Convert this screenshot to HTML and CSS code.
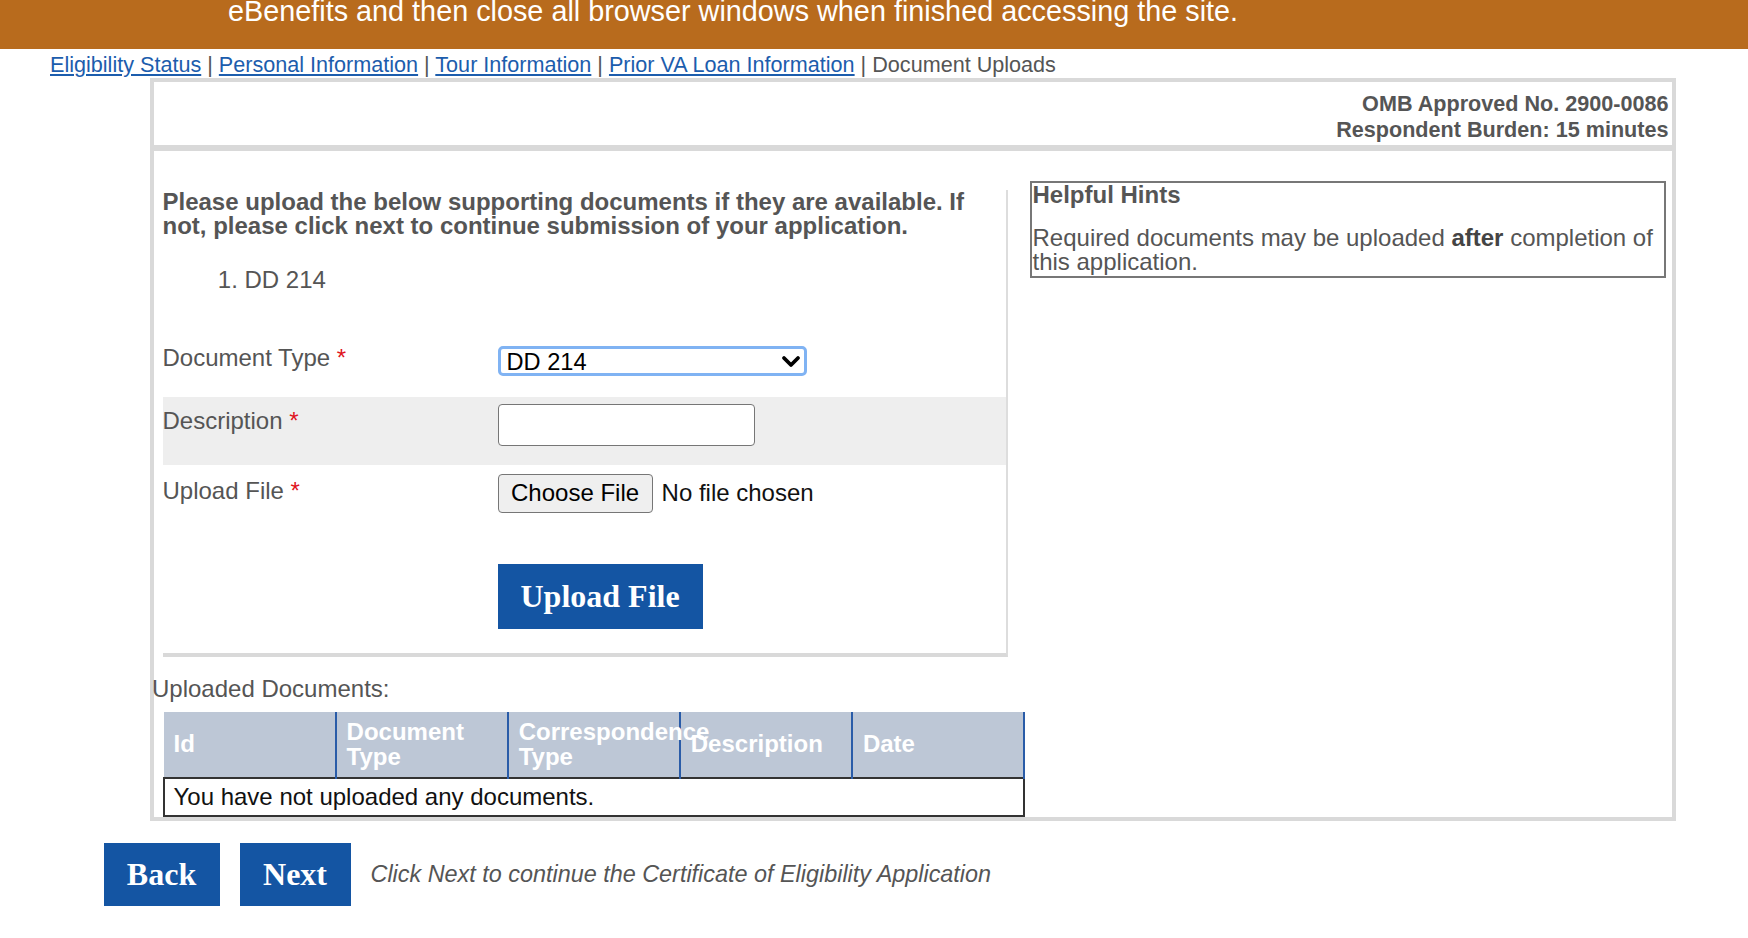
FILE: index.html
```html
<!DOCTYPE html>
<html lang="en">
<head>
<meta charset="utf-8">
<title>Document Uploads</title>
<link rel="stylesheet" href="styles.css">
</head>
<body>
<div class="banner"><p class="banner-text">eBenefits and then close all browser windows when finished accessing the site.</p></div>
<nav class="crumbs"><a href="#">Eligibility Status</a> | <a href="#">Personal Information</a> | <a href="#">Tour Information</a> | <a href="#">Prior VA Loan Information</a> | <span>Document Uploads</span></nav>

<div class="panel">
  <div class="panel-head">
    <div>OMB Approved No. 2900-0086</div>
    <div>Respondent Burden: 15 minutes</div>
  </div>
  <div class="panel-body">
    <div class="upload-col">
      <p class="intro">Please upload the below supporting documents if they are available. If not, please click next to continue submission of your application.</p>
      <ol class="doc-list"><li>DD 214</li></ol>

      <div class="form-row row-type">
        <label class="form-label">Document Type <span class="req">*</span></label>
        <div class="select-wrap">
          <select class="select"><option>DD 214</option></select>
          <svg class="chev" width="20" height="14" viewBox="0 0 20 14"><path d="M3 3 L10 10 L17 3" fill="none" stroke="#000" stroke-width="3.8" stroke-linecap="round" stroke-linejoin="round"/></svg>
        </div>
      </div>
      <div class="form-row row-desc">
        <label class="form-label">Description <span class="req">*</span></label>
        <div><input class="text-input" type="text"></div>
      </div>
      <div class="form-row row-file">
        <label class="form-label">Upload File <span class="req">*</span></label>
        <div class="file-ctl"><span class="file-btn">Choose File</span><span class="file-name">No file chosen</span></div>
      </div>
      <div class="upload-action"><button class="btn-primary btn-upload" type="button">Upload File</button></div>
    </div>
    <aside class="hints">
      <h3 class="hints-title">Helpful Hints</h3>
      <p class="hints-text">Required documents may be uploaded <b>after</b> completion of this application.</p>
    </aside>
  </div>
  <div class="uploaded-label">Uploaded Documents:</div>
  <table class="docs-table">
    <thead>
      <tr><th>Id</th><th>Document Type</th><th>Correspondence Type</th><th>Description</th><th>Date</th></tr>
    </thead>
    <tbody>
      <tr><td colspan="5">You have not uploaded any documents.</td></tr>
    </tbody>
  </table>
</div>

<div class="footer-actions">
  <button class="btn-primary btn-nav btn-back" type="button">Back</button>
  <button class="btn-primary btn-nav btn-next" type="button">Next</button>
  <span class="footer-note">Click Next to continue the Certificate of Eligibility Application</span>
</div>
</body>
</html>
```

FILE: styles.css
```css
* { box-sizing: border-box; }

body {
  margin: 0;
  font-family: "Liberation Sans", Arial, sans-serif;
  font-size: 24px;
  color: #555;
  background: #fff;
}

.banner {
  height: 49px;
  background: #b86b1d;
  overflow: hidden;
}
.banner-text {
  margin: -3.5px 0 0;
  padding-left: 228px;
  color: #fff;
  font-size: 28.8px;
  line-height: 28.8px;
  white-space: nowrap;
}

.crumbs {
  padding: 3px 0 0 50px;
  font-size: 21.6px;
  line-height: 25.5px;
  color: #555;
}
.crumbs a {
  color: #1c5dad;
  text-decoration: underline;
}

.panel {
  margin-left: 150px;
  width: 1526px;
  border: 4px solid #d9d9d9;
}

.panel-head {
  text-align: right;
  font-size: 21.6px;
  font-weight: bold;
  line-height: 26px;
  padding: 9.5px 3.5px 2px 0;
  border-bottom: 6px solid #d9d9d9;
}

.panel-body {
  display: flex;
  align-items: flex-start;
  gap: 22px;
  padding: 30px 6px 0 8.5px;
}

.upload-col {
  flex: 0 0 845px;
  margin-top: 9px;
  border-right: 2px solid #dddddd;
  border-bottom: 4px solid #d9d9d9;
  line-height: 24.5px;
}

.intro {
  margin: 0;
  max-width: 815px;
  font-weight: bold;
  line-height: 24px;
}

.doc-list {
  margin: 30px 0 48px;
  padding-left: 82px;
  line-height: 24px;
}

.form-row {
  display: grid;
  grid-template-columns: 335px 1fr;
  align-items: start;
}
.row-type { height: 57px; padding-top: 6px; }
.row-desc { height: 68px; padding-top: 7px; background: #eeeeee; }
.row-file { height: 48px; padding-top: 9px; }
.row-type .form-label { padding-top: 0; }
.row-desc .form-label { padding-top: 5px; }
.row-file .form-label { padding-top: 5px; }

.form-label { display: block; }
.req { color: #e0141e; }

.select-wrap {
  position: relative;
  width: 309px;
  height: 30px;
}
.select {
  appearance: none;
  -webkit-appearance: none;
  width: 100%;
  height: 100%;
  margin: 0;
  padding: 0 0 0 6px;
  border: 3px solid #80b3f3;
  border-radius: 5px;
  background: #fff;
  font-family: "Liberation Sans", Arial, sans-serif;
  font-size: 23.6px;
  color: #000;
  outline: none;
}
.chev {
  position: absolute;
  right: 6px;
  top: 9px;
  pointer-events: none;
}

.text-input {
  display: block;
  width: 257px;
  height: 42px;
  margin: 0;
  border: 1.5px solid #767676;
  border-radius: 4px;
  background: #fff;
}

.file-ctl {
  display: flex;
  align-items: center;
  font-size: 24px;
  color: #111;
}
.file-btn {
  display: flex;
  align-items: center;
  height: 39px;
  padding: 0 12.5px;
  margin-right: 9px;
  background: #efefef;
  border: 1.5px solid #767676;
  border-radius: 4px;
  color: #000;
}

.upload-action {
  padding: 51px 0 24px 335px;
}

.btn-primary {
  display: inline-block;
  margin: 0;
  border: none;
  background: #1455a3;
  color: #fff;
  font-family: "Liberation Serif", "Times New Roman", serif;
  font-weight: bold;
  font-size: 32px;
  padding: 0 23px;
  cursor: pointer;
}
.btn-upload { height: 65px; }
.btn-nav { height: 63px; padding: 0 23px; }
.btn-back { width: 116px; }
.btn-next { width: 111px; }

.hints {
  flex: 1;
  border: 2px solid #777;
  padding: 0 2px 1.5px 1px;
  line-height: 24.5px;
}
.hints-title {
  margin: 0;
  font-size: 24px;
  font-weight: bold;
}
.hints-text {
  margin: 18px 0 0;
}
.hints-text b { color: #444; }

.uploaded-label {
  margin: 20px 0 0 -2px;
  line-height: 24px;
}

.docs-table {
  margin: 11px 0 0 8.5px;
  width: 862.5px;
  table-layout: fixed;
  border-collapse: collapse;
}
.docs-table th {
  height: 66px;
  padding: 0 10px;
  background: #bdc7d6;
  color: #fff;
  font-weight: bold;
  font-size: 24px;
  line-height: 24.5px;
  text-align: left;
  vertical-align: middle;
  border-right: 2px solid #2a5ca8;
  white-space: normal;
}
.docs-table td {
  height: 38px;
  padding: 0 9px;
  border: 2px solid #333;
  color: #111;
  font-size: 24px;
  line-height: 24.5px;
  background: #fff;
}

.footer-actions {
  display: flex;
  align-items: center;
  gap: 20px;
  margin-top: 21.5px;
  padding-left: 103.5px;
}
.footer-note {
  font-style: italic;
  font-size: 23.4px;
  color: #555;
}
```
